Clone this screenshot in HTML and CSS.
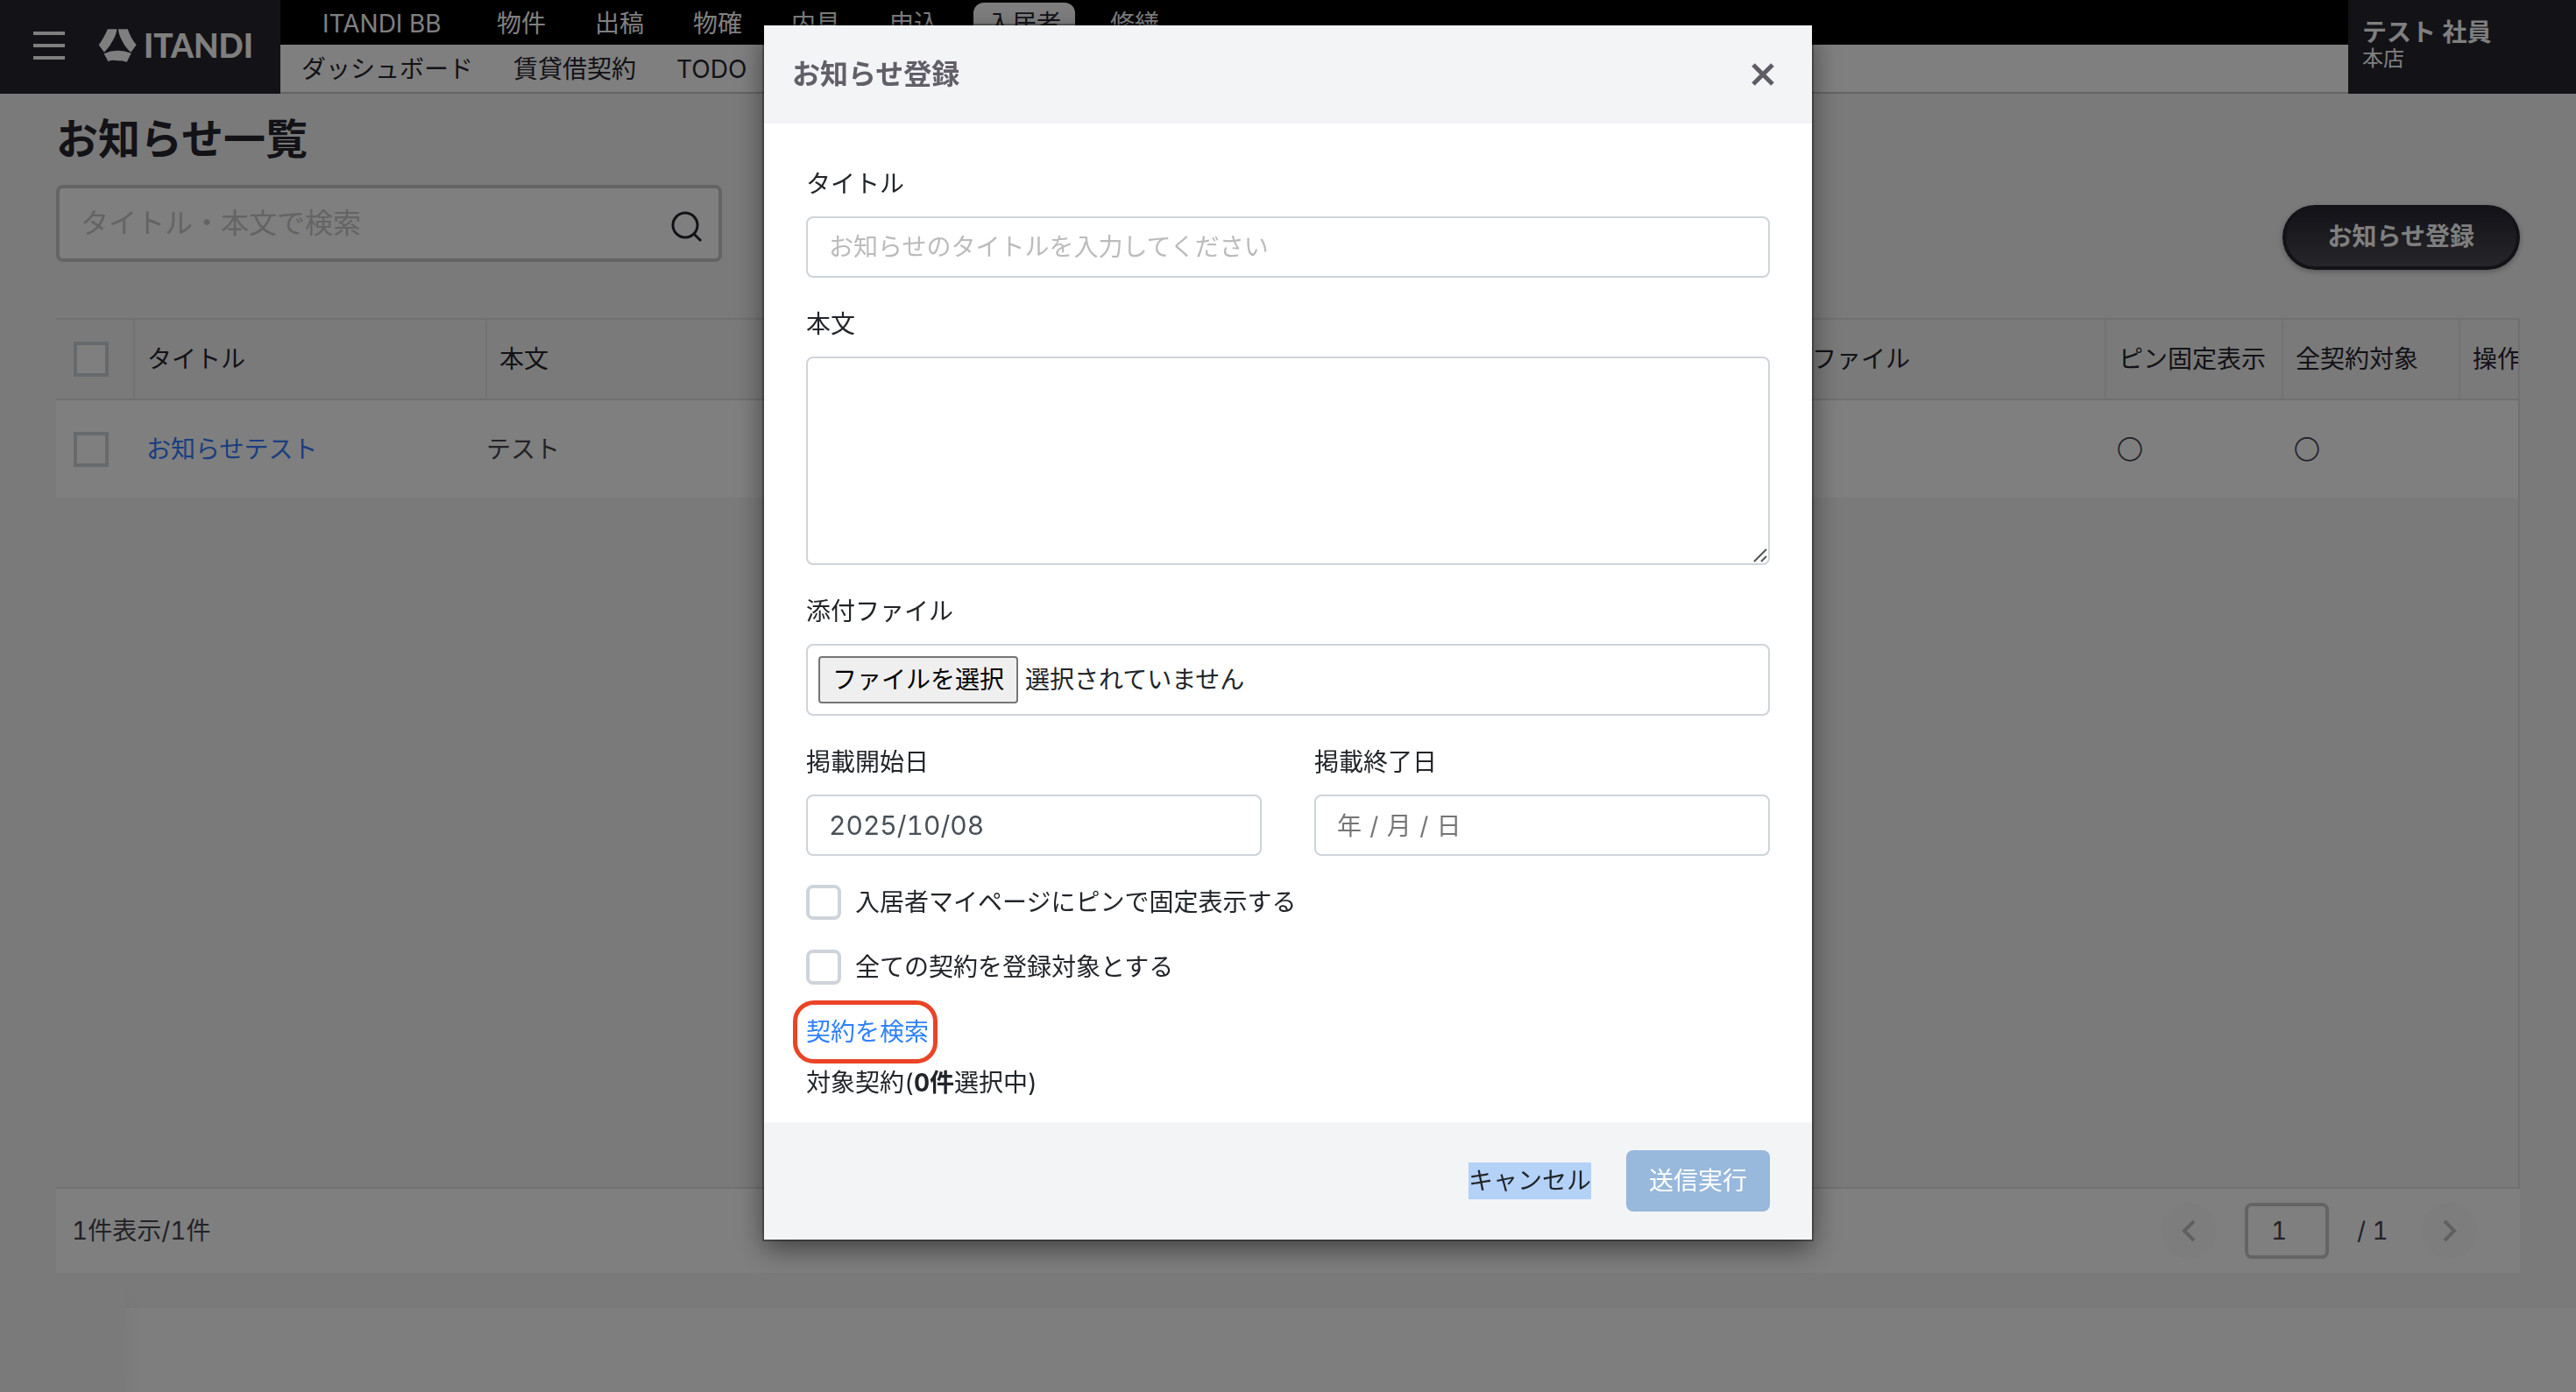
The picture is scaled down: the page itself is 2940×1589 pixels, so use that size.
FILE: index.html
```html
<!DOCTYPE html>
<html lang="ja">
<head>
<meta charset="utf-8">
<meta name="viewport" content="width=device-width, initial-scale=1">
<title>お知らせ一覧</title>
<link rel="stylesheet" href="styles.css">
</head>
<body>
<header class="header">
  <div class="brand">
    <button class="menu-button" type="button" aria-label="メニュー"><span></span><span></span><span></span></button>
    <a class="logo" href="#">
      <svg class="logo-mark" viewBox="276 65 132 116" aria-hidden="true">
        <path d="M308 66H340Q339 83 327 104Q316 126 296 147L277 121Q293 100 308 66Z"/>
        <path d="M345 66H378Q388 97 408 121L389 147Q371 132 359 108Q346 84 345 66Z"/>
        <path d="M295 151Q342 131 390 150L375 180Q360 176 345 176Q327 172 314 176L311 180Z"/>
      </svg>
      <span>ITANDI</span>
    </a>
  </div>
  <div class="navs">
    <nav class="nav-main">
      <a class="product" href="#">ITANDI BB</a>
      <a href="#">物件</a>
      <a href="#">出稿</a>
      <a href="#">物確</a>
      <a href="#">内見</a>
      <a href="#">申込</a>
      <a class="current" href="#">入居者</a>
      <a href="#">修繕</a>
    </nav>
    <nav class="nav-sub">
      <a href="#">ダッシュボード</a>
      <a href="#">賃貸借契約</a>
      <a href="#">TODO</a>
    </nav>
  </div>
  <div class="user">
    <strong>テスト 社員</strong>
    <span>本店</span>
  </div>
</header>

<main class="main">
  <h1 class="page-title">お知らせ一覧</h1>
  <div class="toolbar">
    <div class="search">
      <input type="text" placeholder="タイトル・本文で検索" aria-label="タイトル・本文で検索">
      <button type="button" aria-label="検索">
        <svg viewBox="0 0 36 36" aria-hidden="true"><circle cx="16" cy="16" r="14"/><path d="M26 26L34 34"/></svg>
      </button>
    </div>
    <button class="create" type="button">お知らせ登録</button>
  </div>

  <div class="list">
    <table class="table">
      <colgroup>
        <col class="col-check"><col class="col-title"><col><col class="col-file"><col class="col-flag"><col class="col-flag"><col class="col-action">
      </colgroup>
      <thead>
        <tr>
          <th class="check"><input class="box" type="checkbox" aria-label="全て選択"></th>
          <th>タイトル</th>
          <th>本文</th>
          <th>添付ファイル</th>
          <th>ピン固定表示</th>
          <th>全契約対象</th>
          <th>操作</th>
        </tr>
      </thead>
      <tbody>
        <tr>
          <td class="check"><input class="box" type="checkbox" aria-label="お知らせテストを選択"></td>
          <td><a href="#">お知らせテスト</a></td>
          <td class="text">テスト</td>
          <td></td>
          <td class="flag">◯</td>
          <td class="flag">◯</td>
          <td></td>
        </tr>
      </tbody>
    </table>
  </div>

  <div class="pager">
    <p>1件表示/1件</p>
    <div class="pages">
      <button class="page-step" type="button" aria-label="前のページ"><svg viewBox="0 0 16 26" aria-hidden="true"><path d="M14 2L3 13L14 24"/></svg></button>
      <input class="page-number" type="text" value="1" aria-label="ページ番号">
      <span class="page-total">/ 1</span>
      <button class="page-step" type="button" aria-label="次のページ"><svg viewBox="0 0 16 26" aria-hidden="true"><path d="M2 2L13 13L2 24"/></svg></button>
    </div>
  </div>
</main>
<div class="corner"></div>

<div class="overlay">
  <form class="modal" role="dialog" aria-labelledby="modal-title">
    <div class="modal-header">
      <h2 id="modal-title">お知らせ登録</h2>
      <button class="close" type="button" aria-label="閉じる"><svg viewBox="0 0 28 28" aria-hidden="true"><path d="M3 3L25 25M25 3L3 25"/></svg></button>
    </div>
    <div class="modal-body">
      <div class="field">
        <label for="title">タイトル</label>
        <input class="control" id="title" type="text" placeholder="お知らせのタイトルを入力してください">
      </div>
      <div class="field">
        <label for="body">本文</label>
        <div class="area">
          <textarea class="control" id="body"></textarea>
          <svg class="grip" viewBox="0 0 16 16" aria-hidden="true"><path d="M1 15L15 1M9 15L15 9"/></svg>
        </div>
      </div>
      <div class="field">
        <label for="file">添付ファイル</label>
        <div class="file">
          <input id="file" class="file-input" type="file">
          <label class="file-button" for="file">ファイルを選択</label>
          <span>選択されていません</span>
        </div>
      </div>
      <div class="dates">
        <div class="field">
          <label for="start">掲載開始日</label>
          <input class="control date" id="start" type="text" value="2025/10/08">
        </div>
        <div class="field">
          <label for="end">掲載終了日</label>
          <input class="control date" id="end" type="text" placeholder="年&#8196;/&#8196;月&#8196;/&#8196;日">
        </div>
      </div>
      <label class="option"><input class="box round" type="checkbox">入居者マイページにピンで固定表示する</label>
      <label class="option"><input class="box round" type="checkbox">全ての契約を登録対象とする</label>
      <div class="targets">
        <a class="find" href="#">契約を検索</a>
        <p>対象契約(<b>0件</b>選択中)</p>
      </div>
    </div>
    <div class="modal-footer">
      <button class="cancel" type="button">キャンセル</button>
      <button class="submit" type="submit" disabled>送信実行</button>
    </div>
  </form>
</div>
</body>
</html>
```
FILE: styles.css
```css
* {
  box-sizing: border-box;
}

body {
  margin: 0;
  min-height: 100vh;
  display: flex;
  flex-direction: column;
  padding-bottom: 96px;
  background: #fdfdfd;
  color: #26242f;
  font: 28px/42px Inter, "Noto Sans CJK JP", sans-serif;
  font-variant-numeric: tabular-nums;
}

h1, h2, p {
  margin: 0;
}

a {
  color: inherit;
  text-decoration: none;
}

button, input, textarea {
  margin: 0;
  padding: 0;
  border: 0;
  background: none;
  color: inherit;
  font: inherit;
  font-variant-numeric: tabular-nums;
}

svg {
  display: block;
  fill: none;
}

/* Header */
.header {
  display: flex;
  height: 107px;
}

.brand {
  flex: 0 0 320px;
  display: flex;
  align-items: center;
  gap: 38px;
  padding: 4px 0 8px 38px;
  background: #26242f;
  color: #fff;
}

.menu-button {
  display: grid;
  gap: 10px;
  width: 36px;
}

.menu-button span {
  height: 4px;
  background: #fff;
}

.logo {
  display: flex;
  align-items: center;
  gap: 8px;
  font: 900 37px/40px Lato, sans-serif;
}

.logo-mark {
  width: 44px;
  height: 38px;
  fill: #fff;
}

.navs {
  flex: 1;
  display: flex;
  flex-direction: column;
}

.nav-main {
  display: flex;
  align-items: flex-start;
  gap: 24px;
  height: 51px;
  padding: 3px 32px 0;
  background: #000;
  color: #fff;
}

.nav-main a {
  padding: 3px 16px;
  border-radius: 12px;
}

.nav-main .product {
  min-width: 175px;
}

.nav-main .current {
  background: #fff;
  color: #26242f;
}

.nav-sub {
  flex: 1;
  display: flex;
  align-items: center;
  gap: 46px;
  padding: 2px 24px 0;
  background: #fff;
  border-bottom: 2px solid #c8c8c8;
}

.user {
  flex: 0 0 260px;
  display: flex;
  flex-direction: column;
  padding: 22px 16px;
  background: #26242f;
  color: #fff;
  font-size: 24px;
  line-height: 30px;
}

.user strong {
  font-size: 28px;
}

/* List page */
.main {
  flex: 1;
  display: flex;
  flex-direction: column;
  padding: 16px 64px 40px;
  background: #f5f5f5;
}

.page-title {
  font-size: 48px;
  line-height: 72px;
  margin-bottom: 16px;
}

.toolbar {
  display: flex;
  justify-content: space-between;
  align-items: flex-start;
  margin-bottom: 55px;
}

.search {
  display: flex;
  align-items: center;
  width: 760px;
  height: 88px;
  padding: 0 18px 0 24px;
  border: 4px solid #c8c8c8;
  border-radius: 8px;
  background: #fff;
}

.search input {
  flex: 1;
  font-size: 32px;
}

.search input::placeholder {
  color: #c8c8c8;
}

.search button {
  padding-top: 8px;
}

.search svg {
  width: 36px;
  height: 36px;
  stroke: #26242f;
  stroke-width: 3;
}

.create {
  height: 74px;
  margin-top: 23px;
  padding: 0 48px;
  border: 4px solid #26242f;
  border-top-width: 2px;
  border-radius: 37px;
  background: linear-gradient(#26242f, #4e4c56);
  box-shadow: 0 2px 6px rgba(0, 0, 0, .3);
  color: #fff;
  font-weight: 700;
}

.list {
  flex: 1;
  border: solid #e0e0e0;
  border-width: 2px 2px 2px 0;
}

.table {
  width: 100%;
  table-layout: fixed;
  border-collapse: collapse;
}

.col-check { width: 89px; }
.col-title { width: 402px; }
.col-file { width: 406px; }
.col-flag { width: 202px; }
.col-action { width: 67px; }

.table th,
.table td {
  padding: 0 0 0 14px;
  overflow: hidden;
  text-align: left;
  white-space: nowrap;
}

.table th {
  height: 91px;
  border-left: 2px solid #e6e6e6;
  border-bottom: 2px solid #e0e0e0;
  font-weight: 400;
}

.table th:first-child {
  border-left: 0;
}

.table td {
  height: 112px;
  background: #fff;
  color: #47454f;
}

.table .text {
  padding-left: 0;
}

.table .flag {
  font-size: 20px;
}

.table .check {
  padding-left: 20px;
}

.table a {
  color: #347cff;
}

.box {
  appearance: none;
  display: block;
  flex: none;
  width: 40px;
  height: 40px;
  border: 4px solid #ced4da;
  background: #fff;
}

.round {
  border-radius: 8px;
}

.pager {
  display: flex;
  justify-content: space-between;
  align-items: center;
  height: 96px;
  padding: 0 48px 0 18px;
  background: #fff;
  color: #47454f;
}

.pages {
  display: flex;
  align-items: center;
  gap: 32px;
}

.page-step {
  display: grid;
  place-items: center;
  width: 64px;
  height: 64px;
  border-radius: 50%;
  background: #fafafa;
}

.page-step svg {
  width: 16px;
  height: 26px;
  stroke: #c0bfc4;
  stroke-width: 4;
}

.page-number {
  width: 96px;
  height: 64px;
  padding-left: 26px;
  border: 4px solid #c8c8c8;
  border-radius: 8px;
  background: #fff;
}

.page-total {
  width: 42px;
}

.corner {
  position: fixed;
  left: 0;
  bottom: 0;
  width: 143px;
  height: 130px;
  background: #f5f5f5;
  box-shadow: 0 20px 36px rgba(0, 0, 0, .05);
}

/* Dialog */
.overlay {
  position: absolute;
  inset: 0;
  padding: 29px 24px;
  background: rgba(0, 0, 0, .5);
}

.modal {
  max-width: 1196px;
  margin: 0 auto;
  background: #fff;
  color: #212529;
  box-shadow: 0 0 0 2px rgba(0, 0, 0, .3), 0 10px 30px rgba(0, 0, 0, .5);
}

.modal-header {
  display: flex;
  justify-content: space-between;
  align-items: center;
  height: 112px;
  padding: 0 42px 0 32px;
  background: #f3f4f6;
  color: #625f68;
}

.modal-header h2 {
  font-size: 32px;
}

.close svg {
  width: 28px;
  height: 28px;
  stroke: #5f5c65;
  stroke-width: 5;
}

.modal-body {
  display: flex;
  flex-direction: column;
  gap: 32px;
  padding: 48px 48px 24px;
}

.field {
  display: flex;
  flex-direction: column;
  gap: 16px;
}

.control,
.file {
  display: block;
  width: 100%;
  border: 2px solid #ced4da;
  border-radius: 8px;
  background: #fff;
}

.control {
  height: 70px;
  padding: 0 24px;
}

.control::placeholder {
  color: #bbb;
}

.area {
  position: relative;
}

textarea.control {
  height: 238px;
  padding: 12px 24px;
  resize: none;
}

.grip {
  position: absolute;
  right: 3px;
  bottom: 3px;
  width: 16px;
  height: 16px;
  stroke: #555;
  stroke-width: 2;
}

.file {
  position: relative;
  display: flex;
  align-items: center;
  gap: 8px;
  height: 82px;
  padding: 0 12px;
}

.file-input {
  position: absolute;
  inset: 0;
  opacity: 0;
}

.file-button {
  padding: 4px 14px;
  border: 2px solid #767676;
  border-radius: 4px;
  background: #efefef;
  color: #000;
}

.dates {
  display: grid;
  grid-template-columns: 1fr 1fr;
  gap: 60px;
}

.date {
  color: #495057;
  font-size: 30px;
}

.date::placeholder {
  color: #757575;
  font-size: 28px;
}

.option {
  display: flex;
  align-items: center;
  gap: 16px;
}

.targets {
  display: flex;
  flex-direction: column;
  align-items: flex-start;
  gap: 16px;
}

.find {
  position: relative;
  color: #2f80ff;
}

.find::after {
  content: "";
  position: absolute;
  inset: -15px -10px -15px -15px;
  border: 5px solid #ea4427;
  border-radius: 24px;
}

.modal-footer {
  display: flex;
  justify-content: flex-end;
  align-items: center;
  gap: 40px;
  padding: 32px 48px;
  background: #f3f4f6;
}

.cancel {
  background: #b4d1f8;
}

.submit {
  height: 70px;
  padding: 0 26px;
  border-radius: 8px;
  background: #98b8dc;
  color: #fff;
}
```
